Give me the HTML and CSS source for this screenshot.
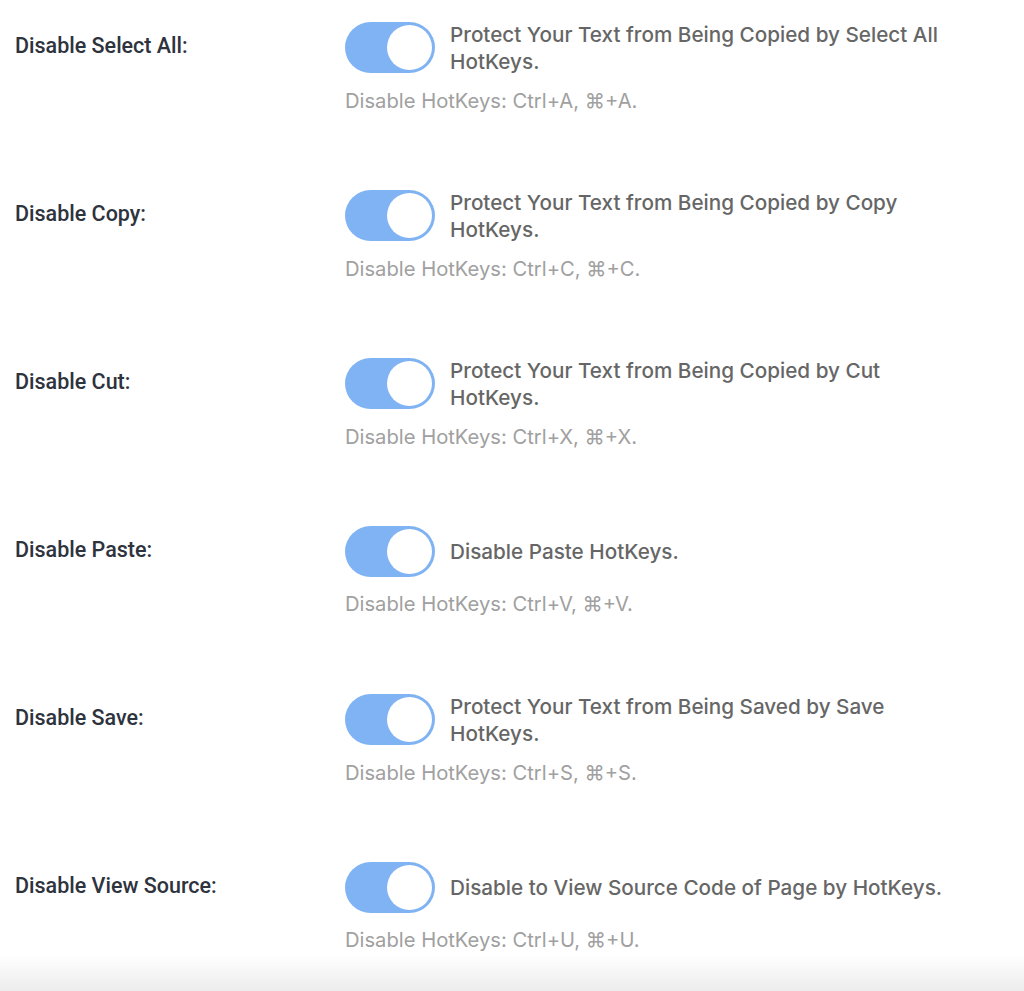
FILE: index.html
```html
<!DOCTYPE html>
<html lang="en">
<head>
  <meta charset="UTF-8">
  <meta name="viewport" content="width=device-width, initial-scale=1.0">
  <title>HotKeys Protection</title>
  <link rel="stylesheet" href="styles.css">
</head>
<body>
  <div class="settings">
    <div class="row">
      <div class="label">Disable Select All:</div>
      <div class="control">
        <div class="switch-line">
          <span class="switch on"><span class="knob"></span></span>
          <span class="desc">Protect Your Text from Being Copied by Select All HotKeys.</span>
        </div>
        <div class="hint">Disable HotKeys: Ctrl+A, ⌘+A.</div>
      </div>
    </div>

    <div class="row">
      <div class="label">Disable Copy:</div>
      <div class="control">
        <div class="switch-line">
          <span class="switch on"><span class="knob"></span></span>
          <span class="desc">Protect Your Text from Being Copied by Copy HotKeys.</span>
        </div>
        <div class="hint">Disable HotKeys: Ctrl+C, ⌘+C.</div>
      </div>
    </div>

    <div class="row">
      <div class="label">Disable Cut:</div>
      <div class="control">
        <div class="switch-line">
          <span class="switch on"><span class="knob"></span></span>
          <span class="desc">Protect Your Text from Being Copied by Cut HotKeys.</span>
        </div>
        <div class="hint">Disable HotKeys: Ctrl+X, ⌘+X.</div>
      </div>
    </div>

    <div class="row">
      <div class="label">Disable Paste:</div>
      <div class="control">
        <div class="switch-line">
          <span class="switch on"><span class="knob"></span></span>
          <span class="desc">Disable Paste HotKeys.</span>
        </div>
        <div class="hint">Disable HotKeys: Ctrl+V, ⌘+V.</div>
      </div>
    </div>

    <div class="row">
      <div class="label">Disable Save:</div>
      <div class="control">
        <div class="switch-line">
          <span class="switch on"><span class="knob"></span></span>
          <span class="desc">Protect Your Text from Being Saved by Save HotKeys.</span>
        </div>
        <div class="hint">Disable HotKeys: Ctrl+S, ⌘+S.</div>
      </div>
    </div>

    <div class="row">
      <div class="label">Disable View Source:</div>
      <div class="control">
        <div class="switch-line">
          <span class="switch on"><span class="knob"></span></span>
          <span class="desc">Disable to View Source Code of Page by HotKeys.</span>
        </div>
        <div class="hint">Disable HotKeys: Ctrl+U, ⌘+U.</div>
      </div>
    </div>
  </div>
  <div class="bottom-fade"></div>
</body>
</html>
```

FILE: styles.css
```css
body {
  margin: 0;
  background-color: #fff;
  font-family: Inter, 'Noto Sans', sans-serif;
  overflow: hidden;
}
.settings {
  padding: 20px 0 0 15px;
}
.row {
  display: grid;
  grid-template-columns: 330px 1fr;
  height: 168px;
}
.label {
  height: 51px;
  display: flex;
  align-items: center;
  font-family: Roboto, sans-serif;
  font-weight: 500;
  font-size: 21.5px;
  color: #2e333d;
}
.switch-line {
  display: flex;
  align-items: center;
  gap: 15px;
  min-height: 54px;
}
.switch {
  flex: none;
  width: 90px;
  height: 51px;
  border-radius: 26px;
  background-color: #80b3f3;
  display: flex;
  align-items: center;
  justify-content: flex-end;
  padding: 0 3px;
  box-sizing: border-box;
}
.knob {
  width: 45px;
  height: 45px;
  border-radius: 50%;
  background-color: #fff;
}
.desc {
  max-width: 515px;
  padding-top: 1px;
  font-size: 20.7px;
  font-weight: 500;
  line-height: 27px;
  color: #666;
}
.hint {
  margin-top: 14px;
  font-size: 20.2px;
  line-height: 24px;
  color: #a0a0a0;
}
.bottom-fade {
  position: fixed;
  left: 0;
  right: 0;
  bottom: 0;
  height: 36px;
  background: linear-gradient(to bottom, rgba(238,238,238,0), #ececec);
}
```
